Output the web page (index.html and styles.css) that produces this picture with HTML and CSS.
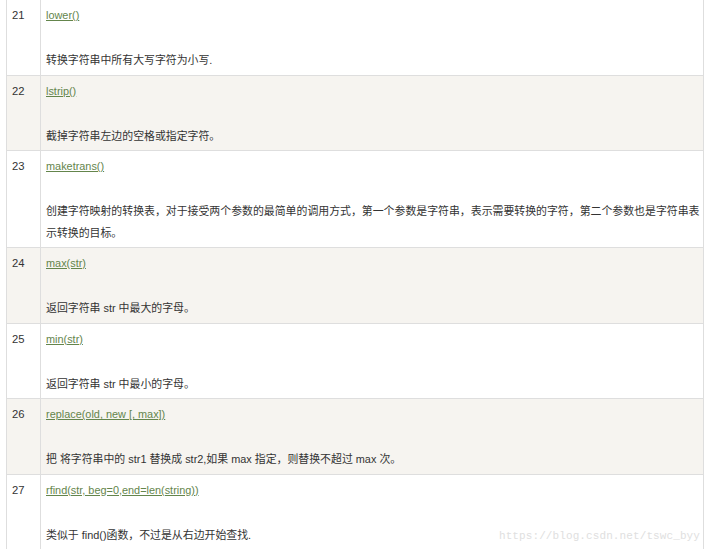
FILE: index.html
```html
<!DOCTYPE html>
<html lang="zh-CN">
<head>
<meta charset="utf-8">
<title>字符串方法</title>
<link rel="stylesheet" href="styles.css">
</head>
<body>
<div class="page">
  <table class="reference">
    <tbody>
      <tr>
        <td class="num">21</td>
        <td class="desc"><a href="#">lower()</a><p>转换字符串中所有大写字符为小写.</p></td>
      </tr>
      <tr>
        <td class="num">22</td>
        <td class="desc"><a href="#">lstrip()</a><p>截掉字符串左边的空格或指定字符。</p></td>
      </tr>
      <tr>
        <td class="num">23</td>
        <td class="desc"><a href="#">maketrans()</a><p>创建字符映射的转换表，对于接受两个参数的最简单的调用方式，第一个参数是字符串，表示需要转换的字符，第二个参数也是字符串表示转换的目标。</p></td>
      </tr>
      <tr>
        <td class="num">24</td>
        <td class="desc"><a href="#">max(str)</a><p>返回字符串 str 中最大的字母。</p></td>
      </tr>
      <tr>
        <td class="num">25</td>
        <td class="desc"><a href="#">min(str)</a><p>返回字符串 str 中最小的字母。</p></td>
      </tr>
      <tr>
        <td class="num">26</td>
        <td class="desc"><a href="#">replace(old, new [, max])</a><p>把 将字符串中的 str1 替换成 str2,如果 max 指定，则替换不超过 max 次。</p></td>
      </tr>
      <tr>
        <td class="num">27</td>
        <td class="desc"><a href="#">rfind(str, beg=0,end=len(string))</a><p>类似于 find()函数，不过是从右边开始查找.</p></td>
      </tr>
    </tbody>
  </table>
  <div class="watermark">https://blog.csdn.net/tswc_byy</div>
</div>
</body>
</html>
```
FILE: styles.css
```css
html, body {
  margin: 0;
  padding: 0;
  background: #ffffff;
}

.page {
  position: relative;
  width: 708px;
  height: 549px;
  overflow: hidden;
  padding-left: 6px;
  box-sizing: border-box;
}

.reference {
  border-collapse: collapse;
  width: 698px;
  margin-top: -1px;
  font-family: "Liberation Sans", "Noto Sans CJK SC", sans-serif;
  font-size: 10.9px;
  line-height: 21.5px;
  color: #333333;
}

.reference tr:nth-child(even) {
  background: #f6f4f0;
}

.reference td {
  border: 1px solid #dedede;
  padding: 5px 5px 3px 5px;
  vertical-align: top;
  text-align: left;
}

.reference td.num {
  width: 23px;
  font-size: 11.25px;
}

.reference td.desc {
  padding-right: 1px;
}

.reference a {
  color: #64854c;
  text-decoration: underline;
  display: block;
}

.reference p {
  margin: 23.5px 0 0 0;
}

.watermark {
  position: absolute;
  right: 8px;
  bottom: 7px;
  font-family: "Liberation Mono", monospace;
  font-size: 11px;
  color: #e0e0e0;
  letter-spacing: 0.1px;
}
```
